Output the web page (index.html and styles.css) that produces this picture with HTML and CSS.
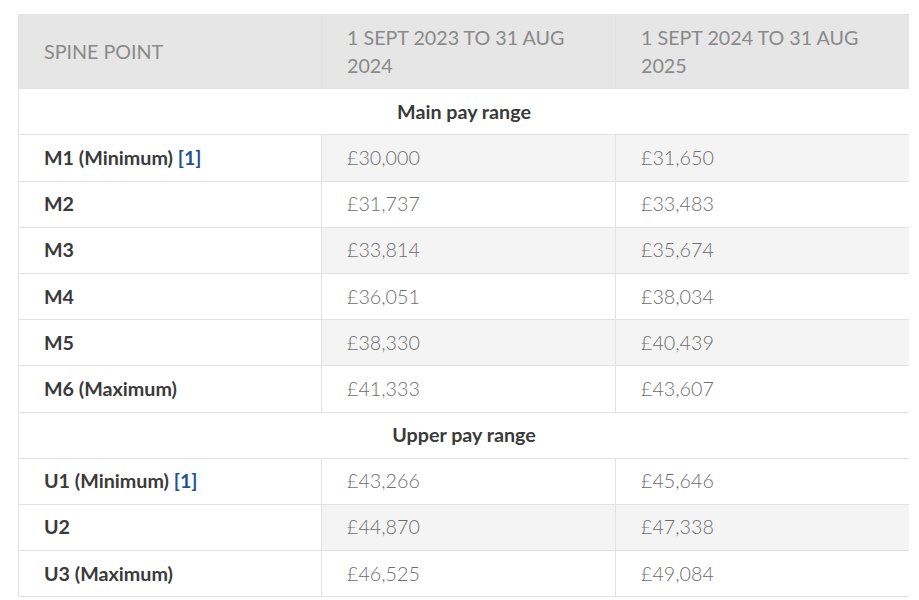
FILE: index.html
```html
<!DOCTYPE html>
<html lang="en">
<head>
<meta charset="utf-8">
<title>Pay ranges</title>
<link rel="stylesheet" href="styles.css">
</head>
<body>
<table class="pay-table">
  <colgroup>
    <col class="c1"><col class="c2"><col class="c3">
  </colgroup>
  <thead>
    <tr>
      <th>Spine point</th>
      <th>1 Sept 2023 to 31 Aug 2024</th>
      <th>1 Sept 2024 to 31 Aug 2025</th>
    </tr>
  </thead>
  <tbody>
    <tr class="range"><th colspan="3">Main pay range</th></tr>
    <tr><th>M1 (Minimum) <a href="#fn1" class="fn">[1]</a></th><td>£30,000</td><td>£31,650</td></tr>
    <tr><th>M2</th><td>£31,737</td><td>£33,483</td></tr>
    <tr><th>M3</th><td>£33,814</td><td>£35,674</td></tr>
    <tr><th>M4</th><td>£36,051</td><td>£38,034</td></tr>
    <tr><th>M5</th><td>£38,330</td><td>£40,439</td></tr>
    <tr><th>M6 (Maximum)</th><td>£41,333</td><td>£43,607</td></tr>
    <tr class="range"><th colspan="3">Upper pay range</th></tr>
    <tr><th>U1 (Minimum) <a href="#fn1" class="fn">[1]</a></th><td>£43,266</td><td>£45,646</td></tr>
    <tr><th>U2</th><td>£44,870</td><td>£47,338</td></tr>
    <tr><th>U3 (Maximum)</th><td>£46,525</td><td>£49,084</td></tr>
  </tbody>
</table>
</body>
</html>
```

FILE: styles.css
```css
html, body {
  background: #fff;
}
body {
  margin: 14px 10px 0 18px;
  font-family: Lato, "Open Sans", sans-serif;
  font-size: 19.7px;
  line-height: 28px;
}
.pay-table {
  width: 891px;
  border-collapse: collapse;
  border: 1px solid #e2e2e2;
  table-layout: fixed;
}
.c1 { width: 303px; }
.c2 { width: 294px; }
.c3 { width: 294px; }
.pay-table th,
.pay-table td {
  padding: 8.6px 25px;
  border: 1px solid #e2e2e2;
  text-align: left;
  vertical-align: top;
}
.pay-table thead th {
  background: #e6e6e6;
  color: #8a8a8a;
  font-weight: 400;
  text-transform: uppercase;
}
.pay-table thead th:first-child {
  vertical-align: middle;
}
.pay-table tbody th {
  font-weight: 700;
  color: #3a3a3a;
  background: #fff;
}
.pay-table tbody td {
  font-weight: 300;
  color: #6e6e6e;
  background: #fff;
}
.pay-table tbody tr:nth-child(even) td {
  background: #f4f4f4;
}
.pay-table tr.range th {
  text-align: center;
}
.fn {
  color: #24528f;
  text-decoration: none;
  font-weight: 700;
}
```
